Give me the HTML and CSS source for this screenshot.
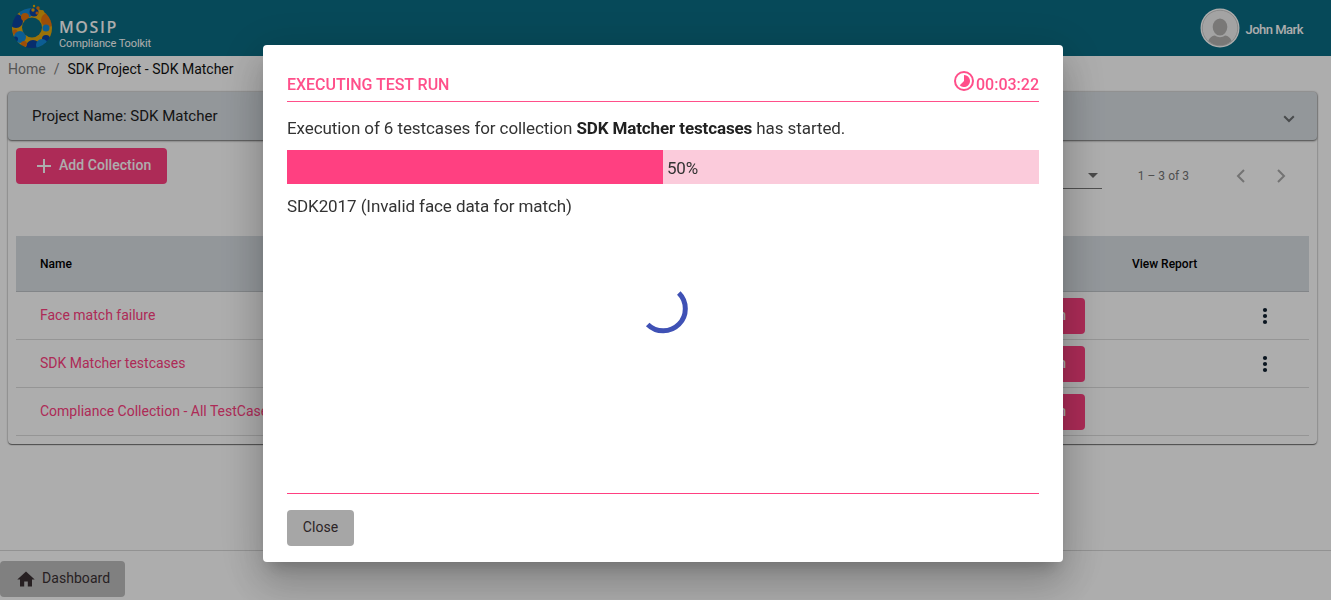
FILE: index.html
```
<!DOCTYPE html>
<html lang="en">
<head>
<meta charset="utf-8">
<title>Compliance Toolkit</title>
<link rel="stylesheet" href="styles.css">
</head>
<body>
<div class="page">
  <header class="topbar">
    <div class="brand">
      <svg class="logo" width="42" height="46" viewBox="0 0 42 46">
        <defs><mask id="ring"><rect width="42" height="46" fill="#000"/><circle cx="21" cy="25" r="20" fill="#fff"/><circle cx="21" cy="24.500" r="10" fill="#000"/></mask></defs>
        <g mask="url(#ring)">
          <rect width="42" height="46" fill="#e5a90c"/>
          <circle cx="15" cy="9" r="6.500" fill="#1389d8"/>
          <circle cx="5" cy="18" r="7" fill="#0b43a0"/>
          <circle cx="14" cy="14" r="4" fill="#e8740c"/>
          <circle cx="23" cy="9" r="4.500" fill="#0b43a0"/>
          <circle cx="37" cy="17" r="7" fill="#e8740c"/>
          <circle cx="35" cy="25" r="3.500" fill="#1389d8"/>
          <circle cx="35" cy="36" r="4" fill="#0b43a0"/>
          <circle cx="4" cy="29" r="2.500" fill="#e8740c"/>
          <circle cx="9" cy="34" r="6" fill="#1389d8"/>
          <circle cx="4.500" cy="36" r="2.500" fill="#0b43a0"/>
          <circle cx="22" cy="44" r="7" fill="#0b43a0"/>
          <circle cx="31" cy="42" r="6" fill="#1389d8"/>
          <circle cx="13" cy="41" r="3" fill="#e8740c"/>
        </g>
        <circle cx="23" cy="3" r="1.200" fill="#e5a90c"/><circle cx="27" cy="5" r="1.700" fill="#e8740c"/>
        <circle cx="22" cy="7" r="1.700" fill="#e5a90c"/><circle cx="31" cy="9" r="2" fill="#e5a90c"/><circle cx="26" cy="10" r="1.500" fill="#e8740c"/>
      </svg>
      <div class="brand-text"><span class="brand-name">MOSIP</span><span class="brand-sub">Compliance Toolkit</span></div>
    </div>
    <div class="user">
      <svg width="40" height="40" viewBox="0 0 40 40"><defs><clipPath id="av"><circle cx="20" cy="20" r="17.500"/></clipPath></defs>
        <circle cx="20" cy="20" r="19.500" fill="#fff"/><circle cx="20" cy="20" r="17.800" fill="#f0f0f0" stroke="#b8b8b8" stroke-width=".7"/>
        <g clip-path="url(#av)" fill="#b3b2b0"><ellipse cx="20" cy="19" rx="7.300" ry="8.600"/><path d="M7 38c1-7 4-10 8-10.500 3 2.300 7 2.300 10 0 4 .5 7 3.500 8 10.500z"/></g>
      </svg>
      <span>John Mark</span>
    </div>
  </header>
  <nav class="crumbs"><a>Home</a><span class="sep">/</span><span class="current">SDK Project - SDK Matcher</span></nav>
  <main class="card">
    <div class="panel"><span>Project Name: SDK Matcher</span>
      <svg width="12" height="8" viewBox="0 0 12 8"><path d="M1.200 1.200 6 6l4.800-4.800" fill="none" stroke="#6c6f71" stroke-width="2"/></svg>
    </div>
    <div class="content">
      <div class="tools">
        <button class="add"><svg width="14" height="14" viewBox="0 0 14 14"><path d="M7 0v14M0 7h14" stroke="#fff" stroke-width="2"/></svg><span>Add Collection</span></button>
        <div class="pager">
          <div class="select"><svg width="10" height="5" viewBox="0 0 10 5"><path d="M0 0h10L5 5z" fill="#6d6d6d"/></svg></div>
          <span class="range">1 – 3 of 3</span>
          <svg class="prev" width="9" height="14" viewBox="0 0 9 14"><path d="M8 1 2 7l6 6" fill="none" stroke="#aaa" stroke-width="2"/></svg>
          <svg width="9" height="14" viewBox="0 0 9 14"><path d="m1 1 6 6-6 6" fill="none" stroke="#aaa" stroke-width="2"/></svg>
        </div>
      </div>
      <div class="table">
        <div class="row head"><span>Name</span><span></span><span>View Report</span><span></span></div>
        <div class="row"><a>Face match failure</a><button class="run">Run</button><span></span><svg class="dots" width="6" height="18" viewBox="0 0 6 18"><circle cx="3" cy="3" r="2.100"/><circle cx="3" cy="9" r="2.100"/><circle cx="3" cy="15" r="2.100"/></svg></div>
        <div class="row"><a>SDK Matcher testcases</a><button class="run">Run</button><span></span><svg class="dots" width="6" height="18" viewBox="0 0 6 18"><circle cx="3" cy="3" r="2.100"/><circle cx="3" cy="9" r="2.100"/><circle cx="3" cy="15" r="2.100"/></svg></div>
        <div class="row"><a>Compliance Collection - All TestCases</a><button class="run">Run</button><span></span><span></span></div>
      </div>
    </div>
  </main>
  <footer class="footer"><button class="dash"><svg width="18" height="16" viewBox="0 0 18 16"><path d="M7.200 15.500v-5h3.600v5h4.200V8.500h2.700L9 .5.300 8.500H3v7z" fill="#3a3033"/></svg><span>Dashboard</span></button></footer>
</div>
<div class="backdrop">
  <section class="dialog">
    <header class="dialog-head"><h1>EXECUTING TEST RUN</h1>
      <div class="timer"><svg width="22" height="22" viewBox="0 0 22 22"><circle cx="11" cy="11" r="9" fill="none" stroke="#ff4f8a" stroke-width="2"/><path d="M11 5a6 6 0 1 1-4.240 10.240L11 11z" fill="#ff4f8a"/></svg><span>00:03:22</span></div>
    </header>
    <p class="message">Execution of 6 testcases for collection <b>SDK Matcher testcases</b> has started.</p>
    <div class="progress"><div class="bar" style="width:50%"></div><span>50%</span></div>
    <p class="case">SDK2017 (Invalid face data for match)</p>
    <div class="spin"><svg width="50" height="50" viewBox="0 0 50 50"><path d="M37.800 7.100A21.300 21.300 0 0 1 6.700 38.400" fill="none" stroke="#3f51b5" stroke-width="5"/></svg></div>
    <footer class="dialog-foot"><button class="close">Close</button></footer>
  </section>
</div>
</body>
</html>
```
FILE: styles.css
```
* { box-sizing: border-box; }
body { margin: 0; font-family: Roboto, "Liberation Sans", sans-serif; font-size: 14px; color: #212121; }
button { border: 0; border-radius: 4px; font: 500 14px Roboto, sans-serif; height: 36px; padding: 0 0 2px; }
svg { display: block; flex: none; }
.page { height: 600px; display: flex; flex-direction: column; background: #fff; overflow: hidden; }
.topbar { height: 56px; flex: none; background: #0a6c83; color: #fff; display: flex; justify-content: space-between; padding: 0 28px 0 11px; }
.brand { display: flex; padding-top: 3px; gap: 6px; }
.brand-text { display: flex; flex-direction: column; padding-top: 16px; }
.brand-name { font: 600 16px/17px "Open Sans", sans-serif; letter-spacing: 1.6px; }
.brand-sub { font-size: 11px; line-height: 13px; padding-top: 1px; letter-spacing: -.1px; }
.user { display: flex; align-items: center; gap: 5px; font-size: 13px; font-weight: 500; height: 56px; letter-spacing: -.5px; }
.user span { padding-top: 3px; }
.crumbs { height: 36px; flex: none; display: flex; padding: 3px 8px; line-height: 20px; color: #7d7d7d; }
.sep { padding: 0 8px; }
.current { color: #111; }
.card { margin: 0 14px 0 8px; height: 352px; flex: none; border-radius: 4px; box-shadow: 0 2px 1px -1px rgba(0,0,0,.3), 0 1px 1px rgba(0,0,0,.25), 0 0 2px rgba(0,0,0,.5); }
.panel { height: 48px; background: #d9dfe4; border-radius: 4px; padding: 0 22px 0 24px; display: flex; align-items: center; justify-content: space-between; font-size: 15px; box-shadow: 0 1px 2px rgba(0,0,0,.6); }
.panel svg { margin-top: 5px; }
.content { padding: 8px 8px 0; }
.tools { height: 88px; display: flex; justify-content: space-between; }
.add { width: 151px; background: #ff4081; color: #fff; display: flex; align-items: center; gap: 8px; padding: 0 0 0 21px; letter-spacing: .05px; }
.add span, .dash span { padding-bottom: 2px; }
.pager { display: flex; align-items: center; height: 54px; padding: 1px 23px 0 0; font-size: 12px; color: #757575; }
.select { width: 100px; height: 26px; border-bottom: 1px solid #757575; display: flex; justify-content: flex-end; align-items: center; padding-right: 4px; }
.range { margin: 0 47px 0 36px; letter-spacing: .03px; }
.prev { margin-right: 32px; }
.row { display: grid; grid-template-columns: 971px 145px 120px 1fr; align-items: center; height: 48px; padding-left: 24px; border-bottom: 1px solid #dcdcdc; }
.row a { color: #ff4081; padding-bottom: 2px; }
.head { height: 56px; background: #d9dfe4; font-size: 12px; font-weight: 500; color: #000; border-color: #c0c5c9; }
.head span:nth-child(3) { margin-left: -24px; }
.run { width: 74px; background: #ff4081; color: #fff; text-align: right; padding-right: 19px; }
.dots { fill: #102030; margin-left: -14px; }
.footer { margin-top: auto; height: 50px; flex: none; border-top: 1px solid #d8d8d8; padding-top: 10px; }
.dash { width: 125px; background: #bdbdbd; display: flex; align-items: center; gap: 7px; padding: 0 0 1px 17px; color: #3a3033; }
.dash, .close { font-weight: 400; letter-spacing: .05px; }
.backdrop { position: fixed; inset: 0; background: rgba(0,0,0,.32); }
.dialog { position: absolute; left: 263px; top: 45px; width: 800px; height: 517px; background: #fff; border-radius: 4px; padding: 24px; box-shadow: 0 11px 15px -7px rgba(0,0,0,.2), 0 24px 38px 3px rgba(0,0,0,.14), 0 9px 46px 8px rgba(0,0,0,.12); display: flex; flex-direction: column; font-size: 16px; }
.dialog-head { height: 33px; flex: none; display: flex; justify-content: space-between; border-bottom: 1px solid #ff4f8a; color: #ff4f8a; }
.dialog h1 { margin: 6px 0 0; font-size: 16px; line-height: 20px; font-weight: 500; letter-spacing: -.03px; }
.timer { display: flex; gap: 1px; font-weight: 500; line-height: 20px; }
.timer span { padding-top: 6px; }
.timer svg { margin: 1px 0 0 -1px; }
.message, .case { margin: 0; font-size: 17px; line-height: 24px; color: #333; letter-spacing: -.09px; }
.message { padding-top: 14px; }
.message b { font-weight: 700; color: #212121; letter-spacing: -.12px; }
.progress { height: 34px; margin-top: 10px; background: #fbcbdb; display: flex; align-items: center; flex: none; }
.bar { height: 100%; background: #ff4081; }
.progress span { padding: 2px 0 0 4px; font-size: 17px; color: #333; letter-spacing: -.2px; }
.case { padding-top: 10px; }
.spin { flex: 1; display: flex; justify-content: center; padding: 68px 0 0 5px; }
.dialog-foot { flex: none; border-top: 1px solid #ff4081; padding-top: 16px; height: 45px; }
.close { width: 67px; background: #a6a6a6; color: #2c2426; }
```
